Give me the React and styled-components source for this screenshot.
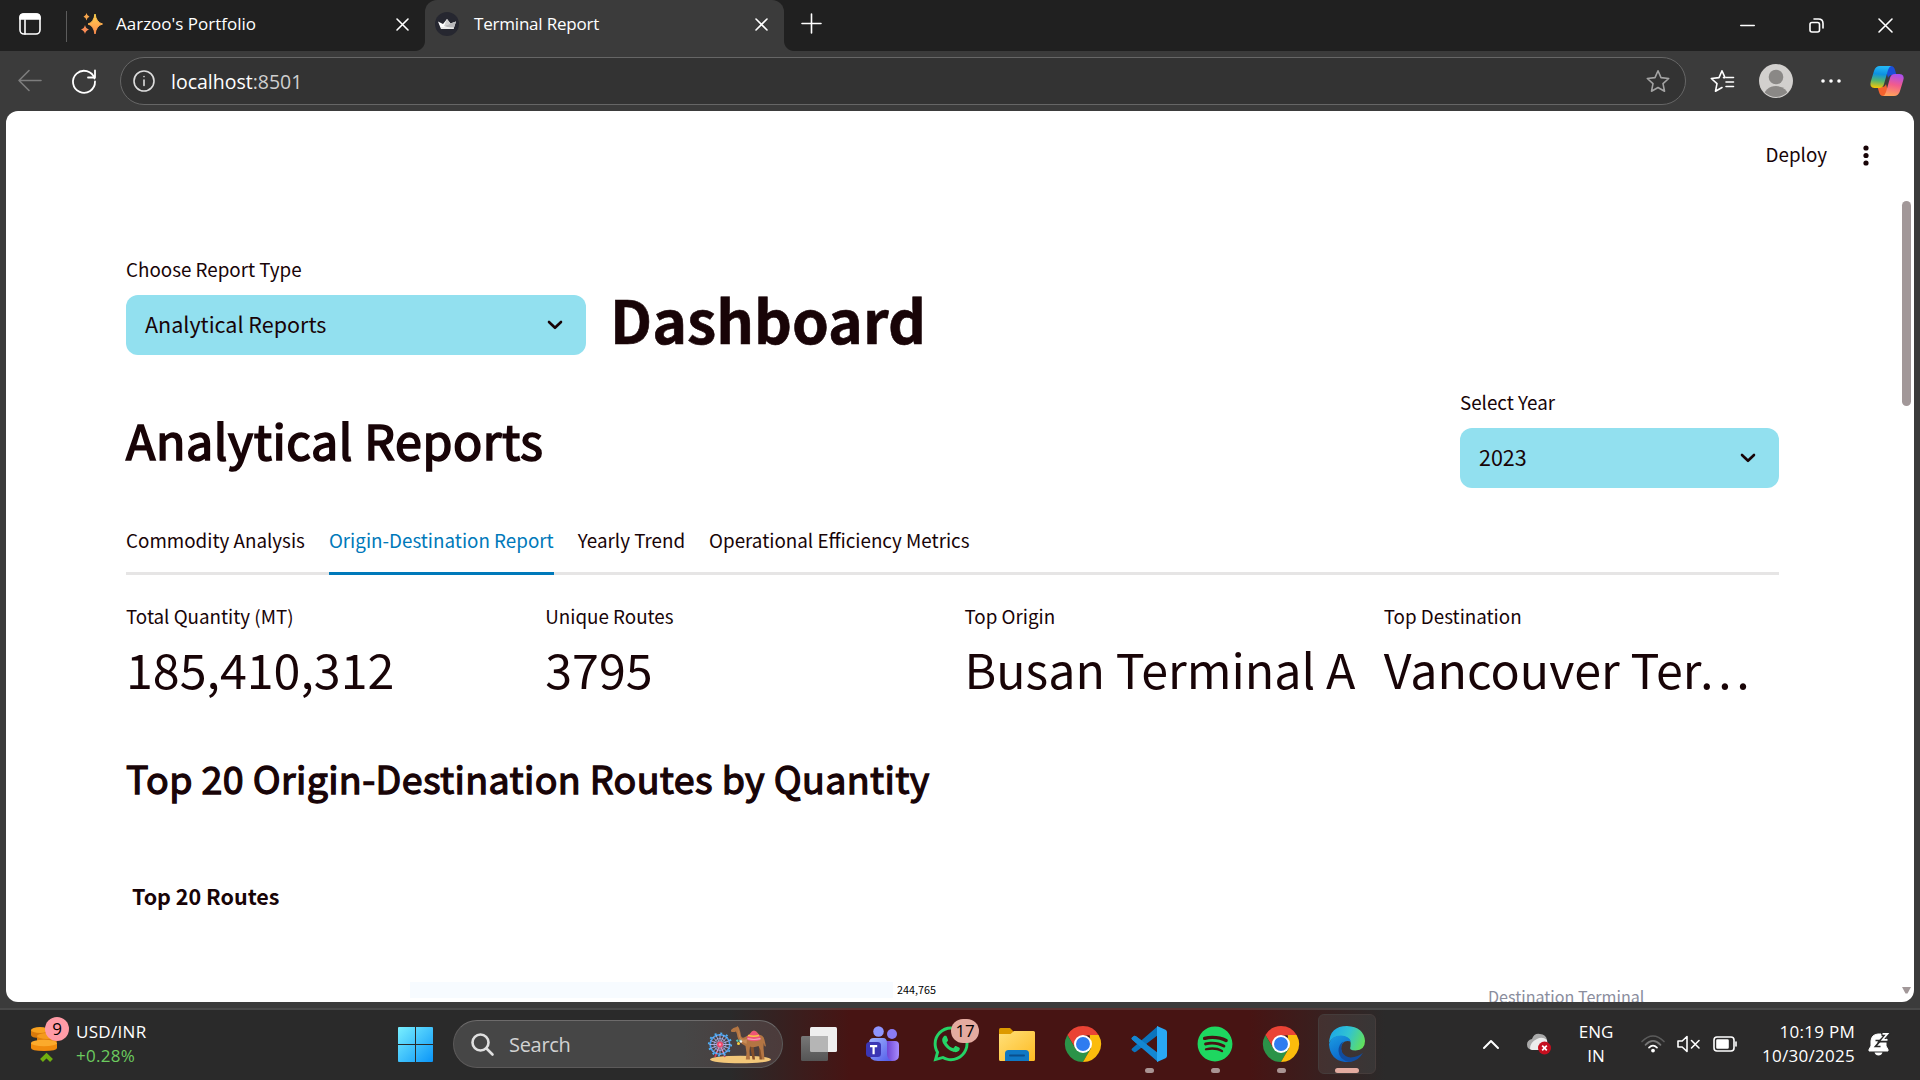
import React from "react";
import styled, { createGlobalStyle } from "styled-components";
import { FaWhatsapp, FaSpotify } from "react-icons/fa";

const SOURCE = `"Noto Sans CJK SC", "Noto Sans", sans-serif`;
const SYSTEM = `"Open Sans", "Noto Sans", sans-serif`;
const INK = "#180407";

const GlobalStyle = createGlobalStyle`
  * { box-sizing: border-box; }
  html, body { margin: 0; padding: 0; background: #3b3b3b; }
  body { overflow: hidden; }
  svg { display: block; flex: none; overflow: visible; }
`;

const Screen = styled.div`
  width: 1920px;
  height: 1080px;
  display: flex;
  flex-direction: column;
  background: #3b3b3b;
  font-family: ${SYSTEM};
  overflow: hidden;
`;

/* ---------- browser chrome ---------- */

const TitleBar = styled.header`
  height: 51px;
  flex: none;
  display: flex;
  align-items: center;
  background: #202020;
  color: #fff;
  padding: 0 27px 0 19px;
`;

const TabMenu = styled.div` padding-bottom: 3px; `;

const TabDivider = styled.span`
  width: 1px;
  height: 31px;
  margin: 2px 12px 0 25px;
  background: #5c5c5c;
`;

const BrowserTab = styled.div`
  position: relative;
  display: flex;
  align-items: center;
  height: 51px;
  width: ${(p) => p.$width}px;
  padding: 0 ${(p) => p.$right}px 3px ${(p) => p.$left}px;
  background: ${(p) => (p.$active ? "#3b3b3b" : "transparent")};
  border-radius: 12px 12px 0 0;
  &::before, &::after {
    content: "";
    display: ${(p) => (p.$active ? "block" : "none")};
    position: absolute;
    bottom: 0;
    width: 10px;
    height: 10px;
  }
  &::before { left: -10px; background: radial-gradient(circle at 0 0, transparent 9.5px, #3b3b3b 10.5px); }
  &::after { right: -10px; background: radial-gradient(circle at 100% 0, transparent 9.5px, #3b3b3b 10.5px); }
`;

const TabTitle = styled.span`
  flex: 1;
  margin-left: ${(p) => p.$gap}px;
  font-size: 17px;
  line-height: 24px;
  letter-spacing: ${(p) => p.$spacing}px;
  white-space: nowrap;
`;

const NewTab = styled.div` margin: 0 auto 4px 17px; `;

const WindowControls = styled.div`
  display: flex;
  align-items: center;
  gap: 54px;
`;

const Toolbar = styled.div`
  height: 60px;
  flex: none;
  display: flex;
  align-items: center;
  padding: 0 16px 0 18px;
`;

const AddressBar = styled.div`
  display: flex;
  align-items: center;
  width: 1566px;
  height: 48px;
  margin: 0 24px;
  padding: 0 15px 0 12px;
  border: 1.5px solid #666;
  border-radius: 24px;
  background: #333;
`;

const Url = styled.span`
  flex: 1;
  margin: 1px 0 0 16px;
  font-size: 19.5px;
  line-height: 28px;
  color: #fff;
  em { font-style: normal; color: #cfcfcf; }
`;

const ToolbarIcons = styled.div`
  display: flex;
  align-items: center;
`;

const Gap = styled.span` width: ${(p) => p.$w}px; flex: none; `;

/* ---------- page ---------- */

const Page = styled.main`
  position: relative;
  width: 1908px;
  height: 891px;
  flex: none;
  margin-left: 6px;
  display: flex;
  flex-direction: column;
  background: #fff;
  border-radius: 12px;
  overflow: hidden;
  font-family: ${SOURCE};
  color: ${INK};
`;

const AppHeader = styled.div`
  height: 90px;
  flex: none;
  display: flex;
  justify-content: flex-end;
  align-items: center;
  padding: 0 45px 1px 0;
  font-size: 18.8px;
`;

const DeployLabel = styled.span` margin: 0 36px 3px 0; line-height: 30px; `;

const Scrollbar = styled.div`
  position: absolute;
  right: 3px;
  top: 90px;
  bottom: 8px;
  width: 9px;
  display: flex;
  flex-direction: column;
  justify-content: space-between;
`;

const Thumb = styled.span` height: 205px; border-radius: 5px; background: #a29899; `;

const Content = styled.div`
  flex: 1;
  display: flex;
  flex-direction: column;
  padding: 52px 135px 0 120px;
`;

const TopRow = styled.div` display: flex; height: 102px; gap: 24px; `;

const Field = styled.div`
  width: ${(p) => p.$width}px;
  display: flex;
  flex-direction: column;
`;

const Label = styled.span`
  height: 32px;
  margin-bottom: 10px;
  font-size: 18.8px;
  line-height: 32px;
`;

const Select = styled.div`
  height: 60px;
  display: flex;
  align-items: center;
  justify-content: space-between;
  padding: 0 23px 0 19px;
  border-radius: 12px;
  background: #92e0ef;
  font-size: 21.5px;
  line-height: 34px;
`;

const SelectValue = styled.span` margin-bottom: 3px; `;

const Title = styled.h1`
  margin: 26px 0 0;
  font-size: 59px;
  line-height: 80px;
  height: 80px;
  font-weight: 700;
  -webkit-text-stroke: 0.6px ${INK};
`;

const ReportRow = styled.div`
  display: flex;
  justify-content: space-between;
  margin-top: 31px;
  height: 102px;
`;

const SectionTitle = styled.h2`
  margin: 18px 0 0;
  font-size: 48.3px;
  line-height: 70px;
  height: 70px;
  font-weight: 400;
  letter-spacing: 0.56px;
  -webkit-text-stroke: 1.7px ${INK};
`;

const Tabs = styled.nav`
  display: flex;
  gap: 24px;
  height: 67px;
  margin-top: 20px;
  border-bottom: 3px solid #e6e5e5;
`;

const Tab = styled.span`
  height: 67px;
  line-height: 64px;
  font-size: 18.81px;
  color: ${(p) => (p.$active ? "#0079ba" : INK)};
  border-bottom: 3px solid ${(p) => (p.$active ? "#0079ba" : "transparent")};
`;

const Metrics = styled.div`
  display: grid;
  grid-template-columns: repeat(4, 1fr);
  column-gap: 24px;
  margin-top: 25px;
`;

const MetricLabel = styled.div` font-size: 18.8px; line-height: 32px; height: 32px; `;

const MetricValue = styled.div`
  font-size: 48.35px;
  line-height: 72px;
  height: 72px;
  white-space: nowrap;
`;

const ChartHeading = styled.h3`
  margin: 47px 0 0;
  font-size: 37.6px;
  line-height: 54px;
  height: 54px;
  font-weight: 400;
  letter-spacing: 0.35px;
  -webkit-text-stroke: 1.3px ${INK};
`;

const ChartTitle = styled.div`
  margin: 74px 0 0 6px;
  font-size: 21.5px;
  line-height: 34px;
  height: 34px;
  font-weight: 700;
`;

const ChartRow = styled.div`
  display: flex;
  height: 20px;
  margin-top: 69px;
  padding-left: 284px;
`;

const Bar = styled.span` width: 483px; height: 16px; background: #f7fbff; `;
const BarValue = styled.span` margin-left: 4px; width: 591px; font-size: 10.8px; line-height: 15px; color: #000; `;
const LegendTitle = styled.span` font-size: 16.1px; line-height: 28px; color: #8a8d9d; white-space: nowrap; `;

/* ---------- taskbar ---------- */

const Taskbar = styled.footer`
  height: 72px;
  margin-top: 6px;
  flex: none;
  display: flex;
  align-items: flex-start;
  padding-top: 4px;
  border-top: 2px solid #484848;
  border-image: linear-gradient(90deg, #484848 740px, #5a2f2e 850px, #5a2f2e 1230px, #484848 1370px) 1;
  background: linear-gradient(90deg, #2a2a2a 730px, #471413 850px, #471413 1250px, #2b2a2a 1385px);
  color: #fff;
`;

const Widget = styled.div`
  width: 398px;
  height: 60px;
  padding-left: 30px;
  display: flex;
  align-items: center;
`;

const WidgetIcon = styled.div` position: relative; width: 46px; height: 36px; `;

const Badge = styled.span`
  position: absolute;
  left: ${(p) => p.$left}px;
  top: ${(p) => p.$top}px;
  width: ${(p) => p.$width}px;
  height: 24px;
  border-radius: 12px;
  background: ${(p) => p.$color};
  color: #000;
  font-size: 17px;
  line-height: 23px;
  letter-spacing: -0.3px;
  text-align: center;
`;

const Lines = styled.div`
  width: ${(p) => p.$width || "auto"};
  text-align: ${(p) => p.$align || "left"};
  font-size: 17px;
  line-height: 24px;
  letter-spacing: ${(p) => p.$spacing || 0}px;
  white-space: nowrap;
`;

const Gain = styled.div` color: #6ccb5f; `;

const StartButton = styled.div` height: 60px; display: flex; align-items: center; `;

const SearchBox = styled.div`
  display: flex;
  align-items: center;
  width: 330px;
  height: 48px;
  margin: 6px 3px 0 20px;
  padding: 0 11px 0 17px;
  border: 1.5px solid #5c5a5a;
  border-top-color: #6d6b6b;
  border-radius: 24px;
  background: linear-gradient(90deg, #464646 70%, #4c3b3b);
`;

const SearchText = styled.span`
  flex: 1;
  margin: 1px 0 0 15px;
  font-size: 20px;
  line-height: 28px;
  letter-spacing: -0.3px;
  color: #d2d2d2;
`;

const SearchArt = styled.div` padding-top: 2px; `;

const AppSlot = styled.div`
  position: relative;
  width: 66px;
  height: 60px;
  padding-top: 12px;
  display: flex;
  flex-direction: column;
  align-items: center;
  gap: 6px;
`;

const ActiveSlot = styled(AppSlot)`
  width: 58px;
  margin: 0 4px;
  padding-top: 11px;
  border: 1px solid #453c3b;
  border-radius: 6px;
  background: linear-gradient(90deg, #443130, #383636);
`;

const WhatsAppIcon = styled(FaWhatsapp)`
  width: 40px;
  height: 40px;
  margin: -2px 0;
  color: #25d366;
`;

const Indicator = styled.span`
  width: ${(p) => (p.$wide ? 24 : 9)}px;
  height: 5px;
  flex: none;
  border-radius: 3px;
  background: ${(p) => (p.$wide ? "#e3aba0" : "#a99493")};
`;

const Tray = styled.div`
  height: 60px;
  padding-left: 103px;
  display: flex;
  align-items: center;
`;

/* ---------- icons ---------- */

const Stroke = ({ w, h = w, color = "#fff", sw = 1.6, children }) => (
  <svg width={w} height={h} viewBox={`0 0 ${w} ${h}`} fill="none" stroke={color} strokeWidth={sw} strokeLinecap="round" strokeLinejoin="round">
    {children}
  </svg>
);

const PanelIcon = () => (
  <Stroke w={22}>
    <rect x="1" y="1" width="20" height="20" rx="4" />
    <path d="M1 6V4.500Q1 1 4.500 1h13Q21 1 21 4.500V6Z" fill="#fff" />
    <path d="M6 7v14" />
  </Stroke>
);

const SparkleIcon = () => (
  <svg width="22" height="22" viewBox="0 0 22 22">
    <defs>
      <linearGradient id="spark" x1="0" y1="0" x2="0" y2="1">
        <stop offset="0" stopColor="#ffd34d" />
        <stop offset="1" stopColor="#ff8b4e" />
      </linearGradient>
    </defs>
    <path d="M14 1Q15.300 9.500 21.500 11Q15.300 12.500 14 21Q12.700 12.500 7 11Q12.700 9.500 14 1Z" fill="url(#spark)" stroke="url(#spark)" strokeLinejoin="round" />
    <path d="M5.500 0Q6 3 8.500 3.700Q6 4.500 5.500 7.500Q5 4.500 2.500 3.700Q5 3 5.500 0Z" fill="#f8a64c" />
    <path d="M4 12Q4.700 15.500 8 16.500Q4.700 17.500 4 21Q3.300 17.500 0 16.500Q3.300 15.500 4 12Z" fill="#fb8c55" />
  </svg>
);

const CloseIcon = ({ size }) => (
  <Stroke w={size}><path d={`M1 1L${size - 1} ${size - 1}M${size - 1} 1L1 ${size - 1}`} /></Stroke>
);

const CrownIcon = () => (
  <svg width="24" height="24" viewBox="0 0 24 24">
    <circle cx="12" cy="12" r="12" fill="#262730" />
    <path d="M3 9.500L8 12L12 7L15.500 11.500L21 9.500L18.500 17H6Z" fill="#fff" />
    <path d="M12 7L15.500 11.500L9 14Z" fill="#d0d0d0" />
    <path d="M21 9.500L15.500 11.500L9 14L18.500 17Z" fill="#b9b9bb" />
    <path d="M6 15l12.800.5-.5 1.500H6Z" fill="#e9e9e9" />
  </svg>
);

const STAR = "M12 1.800L15 8.600L22.700 9.500L17 14.600L18.500 22.200L12 18.500L5.500 22.200L7 14.600L1.300 9.500L9 8.600Z";

const Avatar = () => (
  <svg width="34" height="34" viewBox="0 0 34 34">
    <defs><clipPath id="avatar"><circle cx="17" cy="17" r="16" /></clipPath></defs>
    <circle cx="17" cy="17" r="17" fill="#d2d0ce" />
    <g clipPath="url(#avatar)" fill="#8a8886">
      <circle cx="17" cy="13" r="7.300" />
      <ellipse cx="17" cy="33" rx="12.500" ry="11" />
    </g>
  </svg>
);

const Copilot = () => (
  <svg width="34" height="32" viewBox="0 0 34 32">
    <defs>
      <linearGradient id="cpA" x1="0.300" y1="0" x2="0.200" y2="1">
        <stop offset="0" stopColor="#24b7f5" /><stop offset=".35" stopColor="#0d91e1" /><stop offset=".65" stopColor="#52b471" /><stop offset="1" stopColor="#ffc800" />
      </linearGradient>
      <linearGradient id="cpB" x1="0.700" y1="0" x2="0.500" y2="1">
        <stop offset="0" stopColor="#a84ef0" /><stop offset=".5" stopColor="#f25b8d" /><stop offset="1" stopColor="#ffa15c" />
      </linearGradient>
    </defs>
    <path d="M15 1h6q3 0 4 4l1.500 5H22q-3 0-4 3Z" fill="#1b4fd8" />
    <path d="M19 31h-6q-3 0-4-4l-1.500-5H12q3 0 4-3Z" fill="#f4622e" />
    <path d="M10 1h11q-2 1-3 4l-4 14q-1 4-5 4H4.500Q-1 23 .8 16.500L4 6Q5.500 1 10 1Z" fill="url(#cpA)" />
    <path d="M24 31H13q2-1 3-4l4-14q1-4 5-4h4.500Q35 9 33.200 15.500L30 26Q28.500 31 24 31Z" fill="url(#cpB)" />
  </svg>
);

const Chevron = () => (
  <Stroke w={16} h={10} color={INK} sw={2.6}><path d="M2 2L8 7.800L14 2" /></Stroke>
);

const Coins = () => (
  <svg width="28" height="35" viewBox="0 0 28 35">
    <path d="M1 4v5q0 3 9 3t9-3V4Z" fill="#d9790b" />
    <ellipse cx="10" cy="4" rx="9" ry="3" fill="#f8a11f" />
    <path d="M7 10v5q0 3 10 3t10-3v-5Z" fill="#e07e0c" />
    <ellipse cx="17" cy="10" rx="10" ry="3" fill="#f59a1c" />
    <path d="M1 17v5q0 3 13 3t13-3v-5Z" fill="#f08b0d" />
    <ellipse cx="14" cy="17" rx="13" ry="3.200" fill="#fbaa2c" />
    <path d="M11.500 34.500L16.500 29.500L21.500 34.500" fill="none" stroke="#6fae10" strokeWidth="4" />
  </svg>
);

const WindowsLogo = () => (
  <svg width="35" height="35" viewBox="0 0 35 35">
    <defs>
      <linearGradient id="win" gradientUnits="userSpaceOnUse" x1="0" y1="0" x2="35" y2="35">
        <stop offset="0" stopColor="#79f0ff" /><stop offset="1" stopColor="#0a95f8" />
      </linearGradient>
    </defs>
    <path d="M1 0h16v17H0V1q0-1 1-1ZM18 0h16q1 0 1 1v16H18ZM0 18h17v17H1q-1 0-1-1ZM18 18h17v16q0 1-1 1H18Z" fill="url(#win)" />
  </svg>
);

const Desert = () => (
  <svg width="62" height="38" viewBox="0 0 62 38">
    <ellipse cx="31.500" cy="33.500" rx="30.500" ry="3.800" fill="#f3c779" />
    <path d="M6 31L11 18.500L16 31" fill="none" stroke="#d8435b" strokeWidth="1.600" />
    <g fill="none">
      <circle cx="11" cy="18.500" r="9.800" strokeWidth="1.600" stroke="#3f9be8" />
      <circle cx="11" cy="18.500" r="11.200" strokeWidth="1.800" strokeDasharray="2 3.860" stroke="#4fb0f5" />
      <circle cx="11" cy="18.500" r="6" strokeWidth=".8" stroke="#7fa9ec" />
      <path d="M11 8v21M.5 18.500h21M3.600 11l14.800 15M18.400 11L3.600 26M7 9l8 19M15 9L7 28M1.500 14.500l19 8M20.500 14.500l-19 8" strokeWidth=".9" stroke="#b9b3ea" />
    </g>
    <circle cx="11" cy="18.500" r="3" fill="#f0486b" />
    <circle cx="11" cy="18.500" r="1.200" fill="#ff9db0" />
    <path d="M41 19l2.500 14.500H46L44.500 20ZM50 18l.5 15.500H53L53 19Z" fill="#85502a" />
    <path d="M22 4Q24 1.500 27.500 1L28.500 0L30 2Q31.500 6 32 10Q33 13 36 11Q39 9.500 41 7.500Q43 4.500 45 4.500Q48 5 50 8.500Q55 9.500 55.500 14L57 20.500L55.500 20L54.800 17Q54.500 20 54.500 22L55.500 33.500H53L51.500 24L49.500 20Q45 22 41 20.500L40.500 25L41 33.500H36.800L37.500 27L36.500 20Q30 17 28.500 11Q28 7.500 27 5.500Q24 6.500 22 5.500Z" fill="#b37543" />
    <path d="M29 2.500Q30.500 8 31.500 12Q34 15 38 13L37.500 18Q31 15 30 10Z" fill="#c98c56" />
    <path d="M38 10.500Q42 7.500 43 5.500Q45 4 47 5.500Q49 8 51 10L51.500 14Q44.500 16.500 38.500 14Z" fill="#ed5577" />
    <path d="M39 9.500q6 1.500 11 0" fill="none" stroke="#f8c745" strokeWidth="1.400" />
    <path d="M38.500 12.700q6.500 1.600 13 0" fill="none" stroke="#f7a3c3" strokeWidth="1.200" />
    <path d="M27.500 14q2.500 2.500 5-1" fill="none" stroke="#58c8b0" strokeWidth="2" strokeDasharray="2 1" />
    <circle cx="29.500" cy="17.500" r="1.500" fill="#f7d142" />
    <circle cx="32" cy="15.500" r="1.200" fill="#f3f3f3" />
  </svg>
);

const TaskView = () => (
  <svg width="36" height="36" viewBox="0 0 36 36">
    <defs><linearGradient id="tv" x1="0" y1="0" x2="0" y2="1"><stop offset="0" stopColor="#777" /><stop offset="1" stopColor="#555" /></linearGradient></defs>
    <rect x="9" y="1" width="27" height="25" rx="1.500" fill="#efefef" />
    <rect x="0" y="10" width="27" height="25" rx="1.500" fill="url(#tv)" />
    <path d="M9 10h18v16H10.500Q9 26 9 24.500Z" fill="#b5b5b5" />
  </svg>
);

const Teams = () => (
  <svg width="36" height="36" viewBox="0 0 36 36">
    <defs>
      <linearGradient id="tmA" x1="0" y1="0" x2="1" y2="1"><stop offset="0" stopColor="#9fb4ff" /><stop offset="1" stopColor="#5059e8" /></linearGradient>
      <linearGradient id="tmB" x1="0" y1="0" x2="1" y2="0"><stop offset="0" stopColor="#6a3fd0" /><stop offset="1" stopColor="#a78bff" /></linearGradient>
    </defs>
    <circle cx="25" cy="8" r="5" fill="#8a7cf5" />
    <path d="M19 15h9q4 0 4 4v10q0 6-7 6h-6Z" fill="url(#tmB)" />
    <circle cx="11.500" cy="5.500" r="5.300" fill="#8f95ff" />
    <path d="M2 17q0-5 5-5h9q4 0 4 5v11q0 5 5 7H11q-9 0-9-9Z" fill="url(#tmA)" />
    <rect x="-1" y="16" width="15" height="15" rx="3.500" fill="#3b36b5" />
    <path d="M3 20.200h7.200M6.600 20.200v8" stroke="#fff" strokeWidth="2.200" />
  </svg>
);

const Folder = () => (
  <svg width="36" height="36" viewBox="0 0 36 36">
    <defs><linearGradient id="fd" x1="0" y1="0" x2="1" y2="1"><stop offset="0" stopColor="#ffe07a" /><stop offset="1" stopColor="#fdbb22" /></linearGradient></defs>
    <path d="M0 9V3.500Q0 2 1.500 2H11l3.500 3.500V9Z" fill="#dd9a00" />
    <path d="M0 8h11.500L15 5H34.500Q36 5 36 6.500V33.500Q36 35 34.500 35H1.500Q0 35 0 33.500Z" fill="url(#fd)" />
    <path d="M6 35V27.500Q6 24 9.500 24h17Q30 24 30 27.500V35Z" fill="#0f78c4" />
    <path d="M11 29.500h14" stroke="#0a4f8c" strokeWidth="2" strokeLinecap="round" />
  </svg>
);

const Chrome = () => (
  <svg width="36" height="36" viewBox="0 0 48 48">
    <path d="M3.200 12A24 24 0 0 1 44.800 12L24 12.500L14 30Z" fill="#ea4335" />
    <path d="M3.200 12A24 24 0 0 0 24 48L34.400 30L14 30Z" fill="#2b9348" />
    <path d="M44.800 12A24 24 0 0 1 24 48L34.400 30L33 12Z" fill="#fbbc0c" />
    <circle cx="24" cy="24" r="12" fill="#fff" />
    <circle cx="24" cy="24" r="9.300" fill="#2f7cf0" />
  </svg>
);

const VsCode = () => (
  <svg width="36" height="36" viewBox="0 0 36 36">
    <path d="M1 11.500L3 10Q4 9.500 5 10.300L27 27v9L1 13.500Q0 12.500 1 11.500Z" fill="#1487d2" />
    <path d="M1 24.500L3 26Q4 26.500 5 25.700L27 9V0L1 22.500Q0 23.500 1 24.500Z" fill="#0b74bd" />
    <path d="M1 11.500L3 10Q4 9.500 5 10.300L16 18.600L11 22.200L1 13.500Q0 12.500 1 11.500Z" fill="#1487d2" />
    <path d="M26 0L34.500 3.800Q36 4.500 36 6v24q0 1.500-1.500 2.200L26 36Z" fill="#29a8f4" />
  </svg>
);

const Edge = () => (
  <svg width="36" height="36" viewBox="0 0 36 36">
    <defs>
      <linearGradient id="egA" x1="0" y1="0.300" x2="1" y2="0.600"><stop offset="0" stopColor="#1ca7e8" /><stop offset=".5" stopColor="#31c3d2" /><stop offset="1" stopColor="#62e05c" /></linearGradient>
      <linearGradient id="egB" x1="0" y1="0" x2="0.500" y2="1"><stop offset="0" stopColor="#1b9de2" /><stop offset="1" stopColor="#0a63c9" /></linearGradient>
    </defs>
    <path d="M0 17Q1 0 18 0Q35 1 36 15Q36 24 26.500 24.500Q19.500 24.500 21.500 20.500Q23 12 14 10Q4 9 0 17Z" fill="url(#egA)" />
    <path d="M0 18Q2 9.500 12 9.500Q20 10 22 15.500Q12.500 13 12 23Q13 33 24 35Q20 36.300 16 36Q1 34 0 18Z" fill="url(#egB)" />
    <path d="M14.500 15.500Q11 20 13 26Q17 33 25 31Q31 29.500 34 26.500Q30 35 20.500 36Q10 34 9.500 25Q9.500 18 14.500 15.500Z" fill="#124c9e" />
  </svg>
);

const OneDrive = () => (
  <svg width="24" height="22" viewBox="0 0 24 22">
    <path d="M5 17Q0 16 0 11.500Q0 7 5 6Q7 0 13 1Q19 1.500 20 7Q21 12 17 17Z" fill="#a9a9a9" />
    <path d="M3 16Q3 9 10 6Q15 3 20 7Q21 12 18 17H5Z" fill="#ececec" />
    <circle cx="17.500" cy="15" r="6.500" fill="#c50f1f" />
    <path d="M15.200 12.700l4.600 4.600M19.800 12.700l-4.600 4.600" stroke="#fff" strokeWidth="1.700" />
  </svg>
);

const Wifi = () => (
  <svg width="24" height="18" viewBox="0 0 24 18" fill="none" strokeWidth="1.700" strokeLinecap="round">
    <path d="M1 6.500Q12-4.500 23 6.500" stroke="#5b5b5b" />
    <path d="M4.500 9.800Q12 2 19.500 9.800" stroke="#777" />
    <path d="M8 12.600Q12 8.500 16 12.600" stroke="#fff" />
    <circle cx="12" cy="15.600" r="1.900" fill="#fff" />
  </svg>
);

const Speaker = () => (
  <Stroke w={24} h={18}>
    <path d="M1 6h4.200L10 1.500V16.500L5.200 12H1Z" />
    <path d="M14.500 5.500l7.500 7.500M22 5.500L14.500 13" />
  </Stroke>
);

const Battery = () => (
  <Stroke w={25} h={16}>
    <rect x="1" y="1" width="20" height="14" rx="3" />
    <rect x="4" y="4" width="11" height="8" rx=".5" fill="#fff" />
    <path d="M23 6v4" />
  </Stroke>
);

const Bell = () => (
  <svg width="22" height="24" viewBox="0 0 22 24">
    <path d="M1 17.500L3 14V9Q3.500 2.500 10 2h3l1 3h4V14l2 3.500V19H1Z" fill="#fff" stroke="#fff" strokeLinejoin="round" />
    <path d="M6.500 20.500h8q-1 3-4 3t-4-3Z" fill="#fff" />
    <path d="M7.500 8.500h5l-5 6h5" fill="none" stroke="#2a2a2a" strokeWidth="1.700" />
    <path d="M13.500 2h6l-6 6.500h6" fill="none" stroke="#2a2a2a" strokeWidth="4" />
    <path d="M14.500 1.800h5l-5 6h5" fill="none" stroke="#fff" strokeWidth="1.700" />
  </svg>
);

const metrics = [
  ["Total Quantity (MT)", "185,410,312"],
  ["Unique Routes", "3795"],
  ["Top Origin", "Busan Terminal A"],
  ["Top Destination", "Vancouver Ter…"],
];

const reportTabs = ["Commodity Analysis", "Origin-Destination Report", "Yearly Trend", "Operational Efficiency Metrics"];

export default function App() {
  return (
    <Screen>
      <GlobalStyle />
      <TitleBar>
        <TabMenu><PanelIcon /></TabMenu>
        <TabDivider />
        <BrowserTab $width={346} $left={2} $right={16}>
          <SparkleIcon />
          <TabTitle $gap={13} $spacing={0}>Aarzoo's Portfolio</TabTitle>
          <CloseIcon size={13} />
        </BrowserTab>
        <BrowserTab $active $width={359} $left={10} $right={16}>
          <CrownIcon />
          <TabTitle $gap={15} $spacing={-0.2}>Terminal Report</TabTitle>
          <CloseIcon size={13} />
        </BrowserTab>
        <NewTab><Stroke w={21}><path d="M10.500 1v19M1 10.500h19" /></Stroke></NewTab>
        <WindowControls>
          <Stroke w={15}><path d="M.8 7.500h13.400" /></Stroke>
          <Stroke w={15}>
            <rect x="1" y="4.500" width="9.500" height="9.500" rx="2" />
            <path d="M5 1h4.500Q14 1 14 5.500V10" />
          </Stroke>
          <CloseIcon size={15} />
        </WindowControls>
      </TitleBar>

      <Toolbar>
        <Stroke w={24} color="#7d7d7d"><path d="M23 11.500H1M11 1.500L1 11.500L11 21.500" /></Stroke>
        <Gap $w={30} />
        <Stroke w={24} sw={1.8}><path d="M22.500 9.500A11 11 0 1 0 23 12.500M23 1.500V8.500H16" /></Stroke>
        <AddressBar>
          <Stroke w={22} color="#ddd"><circle cx="11" cy="11" r="10" /><path d="M11 10v5.500M11 6.500v.1" /></Stroke>
          <Url>localhost<em>:8501</em></Url>
          <Stroke w={24} color="#a3a3a3"><path d={STAR} /></Stroke>
        </AddressBar>
        <ToolbarIcons>
          <Stroke w={24}>
            <path d="M13.500 8.600H15L12 1.800L9 8.600L1.300 9.500L7 14.600L5.500 22.200L12 18.500" />
            <path d="M16 8.500h7.500M16 13h7.500M16 17.500h7.500" />
          </Stroke>
          <Gap $w={25} />
          <Avatar />
          <Gap $w={28} />
          <svg width="20" height="6" viewBox="0 0 20 6" fill="#fff"><circle cx="2" cy="3" r="1.800" /><circle cx="10" cy="3" r="1.800" /><circle cx="18" cy="3" r="1.800" /></svg>
          <Gap $w={29} />
          <Copilot />
        </ToolbarIcons>
      </Toolbar>

      <Page>
        <AppHeader>
          <DeployLabel>Deploy</DeployLabel>
          <svg width="6" height="21" viewBox="0 0 6 21" fill={INK}><circle cx="3" cy="3" r="2.600" /><circle cx="3" cy="10.500" r="2.600" /><circle cx="3" cy="18" r="2.600" /></svg>
        </AppHeader>
        <Scrollbar>
          <Thumb />
          <svg width="9" height="7" viewBox="0 0 9 7"><path d="M0 0h9L5.500 6.500h-2Z" fill="#a29899" /></svg>
        </Scrollbar>
        <Content>
          <TopRow>
            <Field $width={460}>
              <Label>Choose Report Type</Label>
              <Select><SelectValue>Analytical Reports</SelectValue><Chevron /></Select>
            </Field>
            <Title>Dashboard</Title>
          </TopRow>
          <ReportRow>
            <SectionTitle>Analytical Reports</SectionTitle>
            <Field $width={319}>
              <Label>Select Year</Label>
              <Select><SelectValue>2023</SelectValue><Chevron /></Select>
            </Field>
          </ReportRow>
          <Tabs>
            {reportTabs.map((t, i) => <Tab key={t} $active={i === 1}>{t}</Tab>)}
          </Tabs>
          <Metrics>
            {metrics.map(([label, value]) => (
              <div key={label}>
                <MetricLabel>{label}</MetricLabel>
                <MetricValue>{value}</MetricValue>
              </div>
            ))}
          </Metrics>
          <ChartHeading>Top 20 Origin-Destination Routes by Quantity</ChartHeading>
          <ChartTitle>Top 20 Routes</ChartTitle>
          <ChartRow>
            <Bar />
            <BarValue>244,765</BarValue>
            <LegendTitle>Destination Terminal</LegendTitle>
          </ChartRow>
        </Content>
      </Page>

      <Taskbar>
        <Widget>
          <WidgetIcon>
            <Coins />
            <Badge $left={15} $top={-9} $width={24} $color="#ff9ba6">9</Badge>
          </WidgetIcon>
          <Lines $spacing={0.3}>USD/INR<Gain>+0.28%</Gain></Lines>
        </Widget>
        <StartButton><WindowsLogo /></StartButton>
        <SearchBox>
          <Stroke w={23} color="#e0e0e0" sw={2.6}><circle cx="9.500" cy="9.500" r="8" /><path d="M15.500 15.500L21.500 21.500" /></Stroke>
          <SearchText>Search</SearchText>
          <SearchArt><Desert /></SearchArt>
        </SearchBox>
        <AppSlot><TaskView /></AppSlot>
        <AppSlot><Teams /></AppSlot>
        <AppSlot>
          <WhatsAppIcon />
          <Badge $left={33} $top={5} $width={28} $color="#e3aba0">17</Badge>
        </AppSlot>
        <AppSlot><Folder /></AppSlot>
        <AppSlot><Chrome /></AppSlot>
        <AppSlot><VsCode /><Indicator /></AppSlot>
        <AppSlot><FaSpotify size={36} color="#1ed760" /><Indicator /></AppSlot>
        <AppSlot><Chrome /><Indicator /></AppSlot>
        <ActiveSlot><Edge /><Indicator $wide /></ActiveSlot>
        <Tray>
          <Stroke w={16} h={9} sw={2}><path d="M1 8L8 1L15 8" /></Stroke>
          <Gap $w={28} />
          <OneDrive />
          <Gap $w={20} />
          <Lines $width="50px" $align="center">ENG<br />IN</Lines>
          <Gap $w={20} />
          <Wifi />
          <Gap $w={12} />
          <Speaker />
          <Gap $w={12} />
          <Battery />
          <Lines $width="117px" $align="right" $spacing={0.28}>10:19 PM<br />10/30/2025</Lines>
          <Gap $w={13} />
          <Bell />
        </Tray>
      </Taskbar>
    </Screen>
  );
}
